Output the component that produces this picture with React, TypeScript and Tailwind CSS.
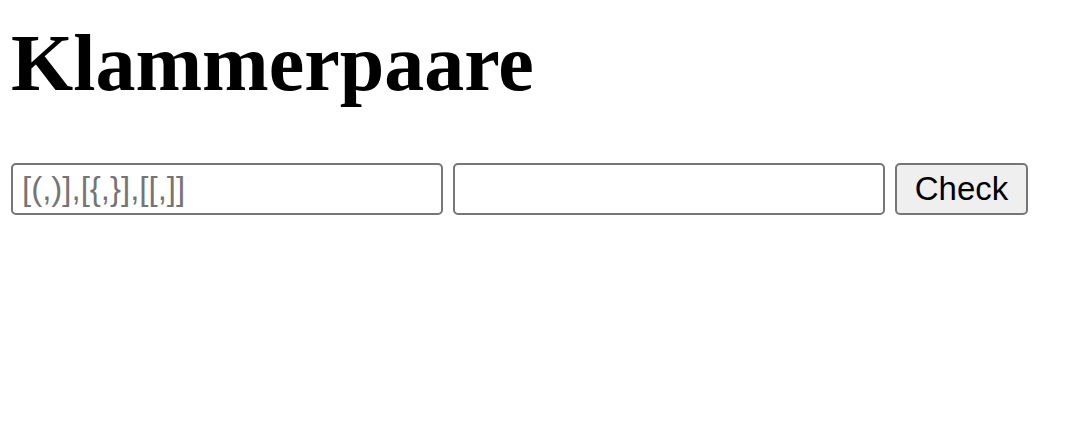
export default function App() {
  return (
    <div className="bg-white min-h-[422px] pl-[11px] pt-[23px]">
      <h1 className="text-[80px] leading-[80px] font-bold text-black" style={{ fontFamily: '"Liberation Serif", "Times New Roman", serif' }}>
        Klammerpaare
      </h1>
      <div className="mt-[60px] flex items-center gap-[10px]" style={{ fontFamily: '"Liberation Sans", Arial, sans-serif' }}>
        <input
          className="w-[432px] h-[52px] border-2 border-[#767676] rounded-[5px] pl-[9px] text-[33px] text-black placeholder:text-[#757575] outline-none bg-white"
          placeholder="[(,)],[{,}],[[,]]"
        />
        <input className="w-[432px] h-[52px] border-2 border-[#767676] rounded-[5px] pl-[9px] text-[33px] text-black outline-none bg-white" />
        <button className="w-[133px] h-[52px] border-2 border-[#767676] rounded-[5px] bg-[#efefef] text-[33px] text-black flex items-center justify-center">
          Check
        </button>
      </div>
    </div>
  );
}
